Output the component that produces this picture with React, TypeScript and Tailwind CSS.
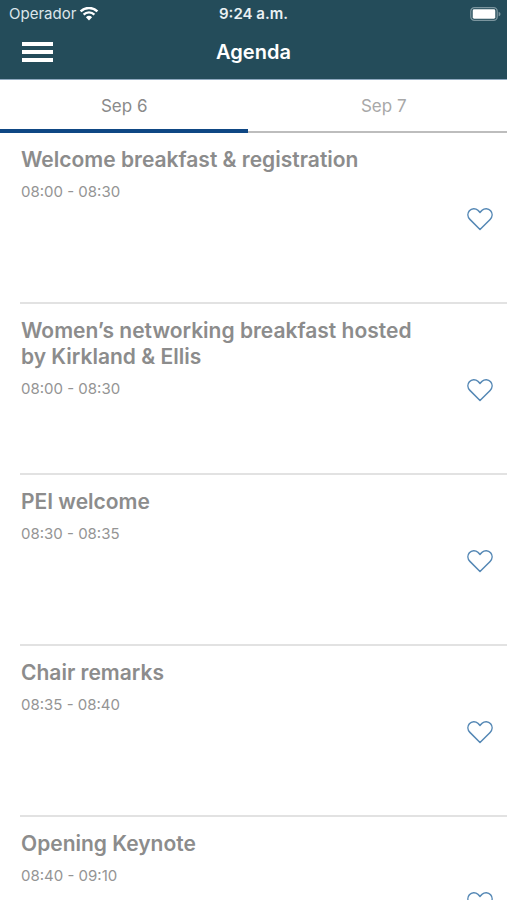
import { useState } from "react";

interface Session {
  title: string;
  time: string;
}

const DAYS = ["Sep 6", "Sep 7"];

const SESSIONS: Session[] = [
  { title: "Welcome breakfast & registration", time: "08:00 - 08:30" },
  { title: "Women’s networking breakfast hosted by Kirkland & Ellis", time: "08:00 - 08:30" },
  { title: "PEI welcome", time: "08:30 - 08:35" },
  { title: "Chair remarks", time: "08:35 - 08:40" },
  { title: "Opening Keynote", time: "08:40 - 09:10" },
];

function WifiIcon() {
  return (
    <svg viewBox="0 0 20 15" className="w-5 h-[15px]" fill="none" stroke="currentColor" aria-hidden="true">
      <path d="M1.6 4.400a12 12 0 0 1 16.8 0" strokeWidth="2.4" />
      <path d="M4.6 7.600a7.7 7.7 0 0 1 10.8 0" strokeWidth="2.3" />
      <path d="M10 13.400 6.900 10.200a4.5 4.5 0 0 1 6.2 0Z" fill="currentColor" stroke="none" />
    </svg>
  );
}

function BatteryIcon() {
  return (
    <svg viewBox="0 0 32 14" className="w-8 h-3.5" aria-hidden="true">
      <rect x="0.8" y="0.7" width="26.4" height="12.6" rx="3.6" fill="none" stroke="#7b959e" strokeWidth="1.3" />
      <rect x="2.700" y="2.300" width="22.600" height="9.400" rx="1.4" fill="#fff" />
      <path d="M28.600 4.700c2.500.9 2.500 3.700 0 4.600Z" fill="#7b959e" />
    </svg>
  );
}

function HeartIcon({ filled }: { filled: boolean }) {
  return (
    <svg
      viewBox="0 0 26 24"
      className="w-[26px] h-6"
      fill={filled ? "currentColor" : "none"}
      stroke="currentColor"
      strokeWidth="1.5"
      strokeLinejoin="round"
      aria-hidden="true"
    >
      <path d="M13 22.500 2.900 12.400C.4 9.800.3 6.200 2.400 3.700 4.700 1.100 8.500 1 10.900 3.300L13 5.400l2.100-2.100c2.400-2.300 6.200-2.200 8.500.4 2.100 2.500 2 6.100-.5 8.700Z" />
    </svg>
  );
}

// ─── Status bar + title ──────────────────────────────────
function Header() {
  return (
    <header className="shrink-0 pb-[3px] bg-[#244c5a] text-white border-b border-[#8fa9c0]">
      <div className="grid grid-cols-3 items-center h-7 px-[9px]">
        <div className="flex items-center gap-[3px] text-[15px] text-[#dce6ea]">
          <span>Operador</span>
          <span className="text-white">
            <WifiIcon />
          </span>
        </div>
        <span className="text-center text-[15px] font-semibold text-[#eaf1f3]">9:24 a.m.</span>
        <div className="flex justify-end -mr-1">
          <BatteryIcon />
        </div>
      </div>
      <div className="grid grid-cols-3 items-center h-12 px-[22px]">
        <button type="button" aria-label="Menu" className="flex flex-col gap-1 w-[31px]">
          <span className="h-1 w-full bg-white" />
          <span className="h-1 w-full bg-white" />
          <span className="h-1 w-full bg-white" />
        </button>
        <h1 className="text-center text-xl font-semibold">Agenda</h1>
      </div>
    </header>
  );
}

// ─── Session row ─────────────────────────────────────────
function SessionRow({ session }: { session: Session }) {
  const [saved, setSaved] = useState(false);

  return (
    <li className="flex items-center ml-5 pr-3.5 h-[171px] shrink-0 border-b-2 border-[#e2e2e2]">
      <div className="flex-1 self-stretch pt-3.5 pl-px pr-10">
        <h2 className="text-[21px] leading-[26px] font-semibold text-[#8c8c8c]">{session.title}</h2>
        <p className="mt-[9px] text-[15px] leading-5 text-[#949494]">{session.time}</p>
      </div>
      <button
        type="button"
        aria-label={`Save ${session.title}`}
        aria-pressed={saved}
        onClick={() => setSaved(!saved)}
        className="pt-0.5 text-[#5588b5]"
      >
        <HeartIcon filled={saved} />
      </button>
    </li>
  );
}

export default function App() {
  const [day, setDay] = useState(0);

  return (
    <div className="flex flex-col h-screen overflow-hidden bg-white font-['Inter',sans-serif]">
      <Header />

      {/* Day tabs */}
      <nav className="flex items-end shrink-0 h-[53px]">
        {DAYS.map((label, i) => (
          <button
            key={label}
            type="button"
            onClick={() => setDay(i)}
            className={`h-full text-[17px] ${i === 0 ? "w-[49%]" : "w-[51%] pl-3"} ${
              i === day
                ? "pt-[5px] border-b-4 border-[#0f4784] text-[#8a8a8a]"
                : "pt-[3px] border-b-2 border-[#bdbdbd] text-[#a8a8a8]"
            }`}
          >
            {label}
          </button>
        ))}
      </nav>

      {/* Sessions */}
      <ul className="flex flex-col flex-1 min-h-0 overflow-y-auto [scrollbar-width:none]">
        {SESSIONS.map((session) => (
          <SessionRow key={session.title} session={session} />
        ))}
      </ul>
    </div>
  );
}
